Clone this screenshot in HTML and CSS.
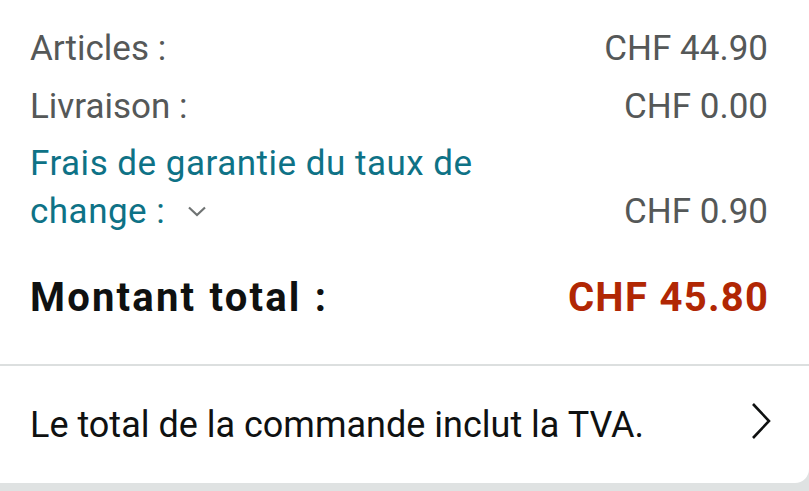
FILE: index.html
```html
<!DOCTYPE html>
<html lang="fr">
<head>
<meta charset="utf-8">
<link rel="stylesheet" href="styles.css">
</head>
<body>
<div class="card">
  <div class="summary">
    <div class="row">
      <span class="label">Articles :</span>
      <span class="value">CHF 44.90</span>
    </div>
    <div class="row">
      <span class="label">Livraison :</span>
      <span class="value">CHF 0.00</span>
    </div>
    <div class="row row-fee">
      <span class="label link">Frais de garantie du taux de<br>change :<svg class="chev-down" width="20" height="12" viewBox="0 0 20 12"><path d="M2 2.5 L10 10 L18 2.5" fill="none" stroke="#6f7373" stroke-width="2.2"/></svg></span>
      <span class="value">CHF 0.90</span>
    </div>
    <div class="row total">
      <span class="label-total">Montant total :</span>
      <span class="value-total">CHF 45.80</span>
    </div>
  </div>
  <div class="tva">
    <span class="tva-text">Le total de la commande inclut la TVA.</span>
    <svg class="chev-right" width="22" height="38" viewBox="0 0 22 38"><path d="M3 2 L19 19 L3 36" fill="none" stroke="#0f1111" stroke-width="2.6"/></svg>
  </div>
</div>
</body>
</html>
```
FILE: styles.css
```css
html, body {
  margin: 0;
  padding: 0;
}
body {
  font-family: Roboto, "Liberation Sans", sans-serif;
  width: 809px;
  height: 491px;
  overflow: hidden;
  background: #dfe2e2;
}
.card {
  background: #ffffff;
  height: 483px;
  border-bottom-right-radius: 14px;
  display: flex;
  flex-direction: column;
}
.summary {
  padding: 20px 41px 0 30px;
  border-bottom: 2px solid #dcdfdf;
  height: 366px;
  box-sizing: border-box;
}
.row {
  display: flex;
  justify-content: space-between;
  align-items: flex-end;
  font-size: 35px;
  line-height: 58px;
  color: #555858;
}
.row-fee {
  line-height: 48px;
  margin-top: 4px;
}
.link {
  color: #0e7286;
  letter-spacing: 0.5px;
}
.chev-down {
  margin-left: 22px;
  vertical-align: 6px;
}
.total {
  margin-top: 32px;
  line-height: 60px;
}
.label-total,
.value-total {
  font-weight: 700;
  font-size: 40px;
}
.label-total {
  color: #0f1111;
  letter-spacing: 2.2px;
  word-spacing: 1px;
}
.value-total {
  color: #b12704;
  letter-spacing: 1.3px;
  margin-right: -1.3px;
}
.tva {
  flex: 1;
  display: flex;
  justify-content: space-between;
  align-items: center;
  padding: 0 37px 0 30px;
}
.tva-text {
  font-size: 36px;
  color: #0f1111;
}
.chev-right {
  display: block;
  transform: translateY(-4px);
}
```
